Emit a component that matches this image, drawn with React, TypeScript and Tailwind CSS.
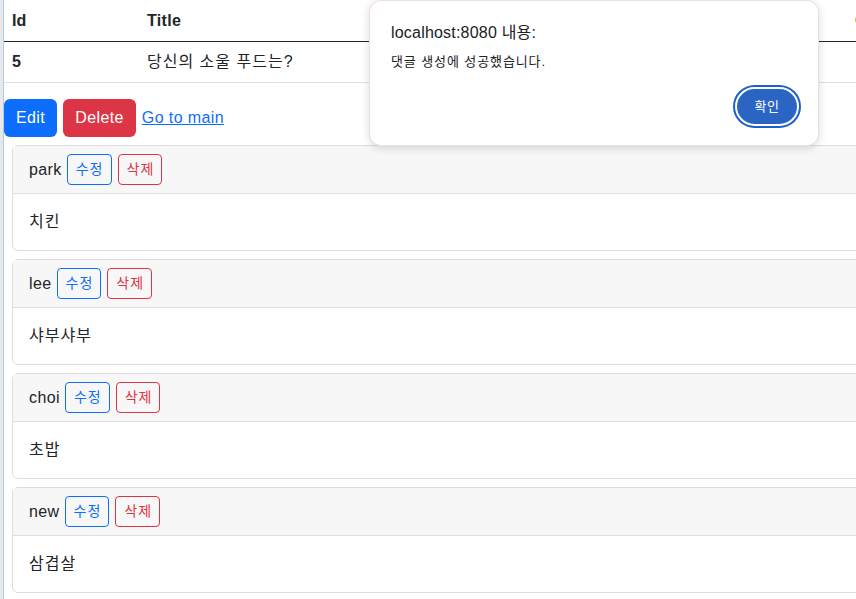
import React from "react";

const comments = [
  { author: "park", content: "치킨" },
  { author: "lee", content: "샤부샤부" },
  { author: "choi", content: "초밥" },
  { author: "new", content: "삼겹살" },
];

const font = {
  fontFamily: '"Liberation Sans", "Noto Sans CJK KR", sans-serif',
};

const CommentCard = ({ author, content }: { author: string; content: string }) => {
  return (
    <div className="mt-2 ml-2 w-[1000px] rounded-[6px] border border-[#dedede] bg-white">
      <div className="flex items-center border-b border-[#dedede] bg-[#f7f7f7] px-4 py-2 text-[16px] leading-6">
        <span className="tracking-[0.4px]">{author}</span>
        <button className="ml-[5px] h-[31px] rounded-[4px] border border-[#0d6efd] pl-2 pr-[7px] text-[14px] leading-[21px] tracking-[1px] text-[#0d6efd]">
          수정
        </button>
        <button className="ml-[6px] h-[31px] rounded-[4px] border border-[#dc3545] pl-2 pr-[7px] text-[14px] leading-[21px] tracking-[1px] text-[#dc3545]">
          삭제
        </button>
      </div>
      <div className="p-4 text-[16px] leading-6 tracking-[1px]">{content}</div>
    </div>
  );
};

const App = () => {
  return (
    <div
      className="relative flex h-[599px] w-[856px] overflow-hidden bg-white text-[#212529]"
      style={font}
    >
      <div className="w-[4px] shrink-0 border-r border-[#b9cbe2] bg-[#e6e8eb]"></div>

      <div className="w-[1100px] shrink-0">
        <table className="w-[1100px] table-fixed border-collapse text-[16px] leading-6">
          <thead>
            <tr className="border-b border-[#212529]">
              <th className="w-[135px] px-2 pt-[9px] pb-2 text-left font-bold">Id</th>
              <th className="w-[708px] px-2 pt-[9px] pb-2 text-left font-bold tracking-[0.3px]">Title</th>
              <th className="px-2 pt-[9px] pb-2 text-left font-bold">Content</th>
            </tr>
          </thead>
          <tbody>
            <tr className="border-b border-[#dee2e6]">
              <td className="px-2 py-2 font-bold">5</td>
              <td className="px-2 py-2 tracking-[1px]">당신의 소울 푸드는?</td>
              <td className="px-2 py-2"></td>
            </tr>
          </tbody>
        </table>

        <div className="mt-4 flex items-center tracking-[0.4px]">
          <button className="h-[38px] rounded-[6px] bg-[#0d6efd] px-3 text-[16px] text-white">
            Edit
          </button>
          <button className="ml-[6px] h-[38px] rounded-[6px] bg-[#dc3545] px-3 text-[16px] text-white">
            Delete
          </button>
          <a className="ml-[6px] text-[16px] text-[#0d6efd] underline" href="#">
            Go to main
          </a>
        </div>

        {comments.map((item, index) => (
          <React.Fragment key={index}>
            <CommentCard author={item.author} content={item.content} />
          </React.Fragment>
        ))}
      </div>

      {/* browser alert */}
      <div className="absolute left-[369px] top-0 h-[146px] w-[450px] rounded-[12px] border border-[#eedde2] bg-white shadow-[0_2px_8px_rgba(0,0,0,0.15)]">
        <div className="px-[21px] pt-[21px] text-[16px] leading-[22px] tracking-[0.2px] text-[#202124]">
          localhost:8080 내용:
        </div>
        <div className="mt-[9px] px-[21px] text-[13px] leading-[18px] tracking-[0.9px] text-[#202124]">
          댓글 생성에 성공했습니다.
        </div>
        <div className="mt-[16px] flex justify-end pr-[19px]">
          <button className="h-[39px] w-[64px] rounded-full border-2 border-white bg-[#2b65c3] text-[13px] tracking-[0.5px] text-white ring-2 ring-[#1a5fd0]">
            확인
          </button>
        </div>
      </div>
    </div>
  );
};

export default App;
